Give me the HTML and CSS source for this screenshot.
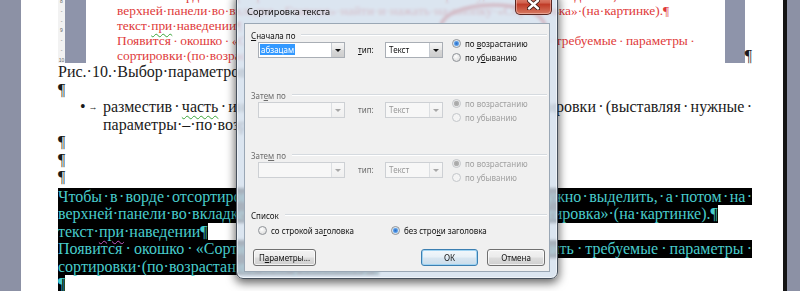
FILE: index.html
```html
<!DOCTYPE html>
<html lang="ru">
<head>
    <meta charset="UTF-8">
    <title>Сортировка текста</title>
    <link rel="stylesheet" href="styles.css">
</head>

<body>
    <div class="page">
        <div class="fig-row">
            <div class="fig">
                <div class="ruler">
                    <span>8</span><span>-</span><span>-</span><span>9</span><span>-</span><span>-</span><span>10</span>
                </div>
                <div class="fig-side"></div>
                <div class="fig-page">
                    <svg class="mark" width="110" height="50" viewBox="0 0 110 50">
                        <ellipse cx="55" cy="26" rx="52" ry="22" fill="none" stroke="#d83030" stroke-width="3.5"/>
                    </svg>
                    <div class="fig-text">
                        <div class="ln j">Чтобы · в · ворде · отсортировать · список · или · текст · по · алфавиту, · его · нужно · выделить, · а · потом · на ·</div>
                        <div class="ln">верхней · панели · во · вкладке · «Главная» · найти · и · нажать · на · кнопку · «Сортировка» · (на · картинке).¶</div>
                        <div class="ln">текст · <span class="wavy">при</span> · наведении¶</div>
                        <div class="ln j">Появится · окошко · «Сортировка · текста», · в · котором · нужно · выставить · требуемые · параметры ·</div>
                        <div class="ln">сортировки · (по · возрастанию · или · убыванию).¶</div>
                    </div>
                </div>
                <div class="fig-side right"></div>
            </div>
            <span class="pil">¶</span>
        </div>

        <div class="ln">Рис. · 10. · Выбор · параметров · сортировки¶</div>
        <div class="ln">¶</div>

        <div class="item">
            <span class="bul">•<span class="tab">→</span></span>
            <div>
                <div class="ln j">разместив · <span class="wavy">часть</span> · информации · в · таблице · и · с · функцией · сортировки · (выставляя · нужные ·</div>
                <div class="ln">параметры · – · по · возрастанию · или · по · убыванию).¶</div>
            </div>
        </div>

        <div class="ln">¶</div>
        <div class="ln">¶</div>
        <div class="ln">¶</div>

        <div class="selected">
            <div class="ln j">Чтобы · в · ворде · отсортировать · список · или · текст · по · алфавиту, · его · нужно · выделить, · а · потом · на ·</div>
            <div class="ln last">верхней · панели · во · вкладке · «Главная» · найти · и · нажать · на · кнопку · «Сортировка» · (на · картинке).¶</div>
            <div class="ln last">текст · <span class="wavy pink">при</span> · наведении¶</div>
            <div class="ln j">Появится · окошко · «Сортировка · текста», · в · котором · нужно · выставить · требуемые · параметры ·</div>
            <div class="ln last">сортировки · (по · возрастанию · или · убыванию).¶</div>
            <div class="ln last">¶</div>
        </div>
    </div>

    <div class="dialog">
        <div class="titlebar">
            <span class="title">Сортировка текста</span>
            <span class="close">
                <svg width="13" height="11" viewBox="0 0 13 11">
                    <path d="M2 1.5 L11 9.5 M11 1.5 L2 9.5" stroke="#3b1a16" stroke-width="4.2" stroke-linecap="round"/>
                    <path d="M2 1.5 L11 9.5 M11 1.5 L2 9.5" stroke="#fff" stroke-width="2.4" stroke-linecap="round"/>
                </svg>
            </span>
        </div>

        <div class="client">
            <div class="group">
                <div class="group-head"><span><u>С</u>начала по</span><i></i></div>
                <div class="group-row">
                    <div class="combo wide"><span class="val"><span class="hilite">абзацам</span></span><span class="drop"></span></div>
                    <span class="lbl"><u>т</u>ип:</span>
                    <div class="combo"><span class="val">Текст</span><span class="drop"></span></div>
                    <div class="radios">
                        <span class="radio on"><b></b><span>по <u>в</u>озрастанию</span></span>
                        <span class="radio"><b></b><span>по у<u>б</u>ыванию</span></span>
                    </div>
                </div>
            </div>

            <div class="group off">
                <div class="group-head"><span>Зат<u>е</u>м по</span><i></i></div>
                <div class="group-row">
                    <div class="combo wide"><span class="val"></span><span class="drop"></span></div>
                    <span class="lbl">тип:</span>
                    <div class="combo"><span class="val">Текст</span><span class="drop"></span></div>
                    <div class="radios">
                        <span class="radio on"><b></b><span>по возрастанию</span></span>
                        <span class="radio"><b></b><span>по убыванию</span></span>
                    </div>
                </div>
            </div>

            <div class="group off">
                <div class="group-head"><span>Зате<u>м</u> по</span><i></i></div>
                <div class="group-row">
                    <div class="combo wide"><span class="val"></span><span class="drop"></span></div>
                    <span class="lbl">тип:</span>
                    <div class="combo"><span class="val">Текст</span><span class="drop"></span></div>
                    <div class="radios">
                        <span class="radio on"><b></b><span>по возрастанию</span></span>
                        <span class="radio"><b></b><span>по убыванию</span></span>
                    </div>
                </div>
            </div>

            <div class="group-head"><span>Список</span><i></i></div>
            <div class="list-row">
                <span class="radio"><b></b><span>со строкой за<u>г</u>оловка</span></span>
                <span class="radio on"><b></b><span>без стро<u>к</u>и заголовка</span></span>
            </div>

            <div class="buttons">
                <span class="btn params">П<u>а</u>раметры...</span>
                <span class="btn ok">ОК</span>
                <span class="btn cancel">Отмена</span>
            </div>
        </div>
    </div>
</body>
</html>
```

FILE: styles.css
```css
body {
    margin: 0;
    height: 291px;
    overflow: hidden;
    position: relative;
    background-color: #8c91a5;
    font-family: "Liberation Serif", "Times New Roman", serif;
}

/* document page */
.page {
    margin-left: 21px;
    width: 694px;
    height: 291px;
    overflow: hidden;
    padding: 0 31px 0 37px;
    background-color: #fff;
    border-right: 4px solid #141414;
    font-size: 16px;
    line-height: 17.5px;
    color: #1a1a1a;
}

.ln {
    word-spacing: -0.25em;
}

.j {
    text-align: justify;
    text-align-last: justify;
}

.wavy {
    text-decoration: underline wavy #3aa53a;
    text-decoration-thickness: 1px;
    text-underline-offset: 3px;
}

.wavy.pink {
    text-decoration-color: #c45ac4;
}

/* picture of the earlier page */
.fig-row {
    display: flex;
    align-items: flex-end;
    height: 63px;
}

.fig {
    display: flex;
    width: 689px;
    height: 63px;
    overflow: hidden;
}

.ruler {
    width: 7px;
    background-color: #f2f2f2;
    display: flex;
    flex-direction: column;
    align-items: center;
    justify-content: space-between;
    font-family: "Liberation Sans", Arial, sans-serif;
    font-size: 5px;
    line-height: 6px;
    color: #666;
    margin-top: -2px;
}

.fig-side {
    width: 21px;
    background-color: #8e94aa;
}

.fig-side.right {
    width: 20px;
}

.fig-page {
    flex: 1;
    position: relative;
    padding: 0 30px 0 31px;
    background-color: #fff;
}

.mark {
    position: absolute;
    left: 352px;
    top: 1px;
}

.fig-text {
    margin-top: -12px;
    font-size: 13.4px;
    line-height: 15px;
    color: #e03a3a;
}

.pil {
    line-height: 14px;
}

/* bullet item */
.item {
    display: grid;
    grid-template-columns: 45px 1fr;
}

.bul {
    padding-left: 22px;
    font-size: 16px;
}

.bul .tab {
    font-size: 9px;
    margin-left: 3px;
    vertical-align: 2px;
}

/* selected paragraph */
.selected {
    margin-top: 2px;
    color: #48cccc;
}

.selected .ln {
    background-color: #000;
}

.selected .ln.last {
    width: fit-content;
}

/* sort dialog */
.dialog {
    position: absolute;
    left: 236px;
    top: -8px;
    width: 306px;
    padding: 0 7px 6px;
    background-color: rgba(210, 222, 236, 0.8);
    backdrop-filter: blur(1.5px);
    border: 1px solid #46505c;
    border-radius: 7px;
    box-shadow: 0 3px 10px 1px rgba(0, 0, 0, 0.6), inset 0 0 0 1px rgba(255, 255, 255, 0.55);
    font-family: "Noto Sans", "Open Sans", sans-serif;
    font-size: 8px;
    color: #111;
}

.titlebar {
    display: flex;
    align-items: flex-start;
    height: 30px;
}

.title {
    margin: 12px 0 0 3px;
    font-size: 9.2px;
    color: #111;
}

.close {
    margin: 0 -2px 0 auto;
    width: 37px;
    height: 22px;
    box-sizing: border-box;
    display: flex;
    align-items: center;
    justify-content: center;
    padding-top: 2px;
    border: 1px solid #5a2620;
    border-top: none;
    border-radius: 0 0 5px 5px;
    background: linear-gradient(#e9a898, #d26652 45%, #c03c28 55%, #d77a62);
    box-shadow: inset 0 0 0 1px rgba(255, 220, 210, 0.45);
}

.client {
    height: 249px;
    box-sizing: border-box;
    padding: 4px 2px 0 6px;
    background-color: #f0f0f0;
    border: 1px solid #9aa7b5;
}

.group {
    height: 60px;
}

.group-head {
    display: flex;
    align-items: center;
    height: 14px;
}

.group-head i {
    flex: 1;
    margin-left: 6px;
    border-top: 1px solid #d5dadf;
    border-bottom: 1px solid #fff;
}

.group-row {
    display: flex;
    align-items: flex-start;
    margin-left: 7px;
}

.combo {
    display: flex;
    width: 58px;
    height: 16px;
    box-sizing: border-box;
    border: 1px solid #a9aeb5;
    background-color: #fff;
}

.combo.wide {
    width: 87px;
}

.combo .val {
    flex: 1;
    padding-left: 3px;
    line-height: 14px;
}

.combo.wide .val {
    padding-left: 1px;
}

.hilite {
    display: inline-block;
    background-color: #3399ff;
    color: #fff;
    line-height: 11px;
    padding: 0 1px;
}

.drop {
    width: 13px;
    box-sizing: border-box;
    border-left: 1px solid #c6cbd1;
    background: linear-gradient(#f6f6f6, #e6e6e6 50%, #d8d8d8 50%, #cdcdcd);
    display: flex;
    align-items: center;
    justify-content: center;
}

.drop::before {
    content: "";
    border-left: 3px solid transparent;
    border-right: 3px solid transparent;
    border-top: 3px solid #111;
}

.lbl {
    width: 27px;
    margin-left: 13px;
    line-height: 16px;
}

.radios {
    display: flex;
    flex-direction: column;
    margin-left: 9px;
    margin-top: -5px;
}

.radio {
    display: flex;
    align-items: center;
    gap: 4px;
    height: 13.5px;
}

.radio b {
    width: 9px;
    height: 9px;
    box-sizing: border-box;
    border: 1px solid #8f9398;
    border-radius: 50%;
    background: radial-gradient(circle at 40% 35%, #ffffff, #dcdcdc 80%);
}

.radio.on b {
    background: radial-gradient(circle, #2b6fc6 0, #4a8ee0 1.6px, #8fc0f0 2.6px, #f4f4f4 3.2px, #dcdcdc 100%);
}

.off .group-head span,
.off .lbl {
    color: #6d6d6d;
}

.off .combo {
    border-color: #cdd0d4;
    background-color: #f7f7f7;
    color: #9a9a9a;
}

.off .drop {
    border-left-color: #dcdfe2;
    background: linear-gradient(#f8f8f8, #efefef);
}

.off .drop::before {
    border-top-color: #a8a8a8;
}

.off .radio {
    color: #a0a0a0;
}

.off .radio b {
    border-color: #c3c6ca;
    background: #f4f4f4;
}

.off .radio.on b {
    background: radial-gradient(circle, #a4a4a4 0, #b4b4b4 2.4px, #f4f4f4 3.2px, #f0f0f0 100%);
}

.list-row {
    display: grid;
    grid-template-columns: 133px auto;
    margin: 1px 0 0 7px;
    height: 14px;
    align-items: center;
}

.buttons {
    display: flex;
    gap: 9px;
    margin: 12px 2px 0 2px;
}

.btn {
    height: 17px;
    box-sizing: border-box;
    border: 1px solid #707070;
    border-radius: 3px;
    background: linear-gradient(#f3f3f3, #ebebeb 48%, #dddddd 52%, #cfcfcf);
    box-shadow: inset 0 0 0 1px rgba(255, 255, 255, 0.7);
    text-align: center;
    line-height: 15px;
}

.params {
    width: 63px;
    margin-right: auto;
}

.ok {
    width: 57px;
    border-color: #3c7fb1;
    background: linear-gradient(#f2f7fb, #e7f0f7 48%, #d8e6f1 52%, #cadcea);
    box-shadow: inset 0 0 0 1px #9fd3f2;
}

.cancel {
    width: 58px;
}
```
